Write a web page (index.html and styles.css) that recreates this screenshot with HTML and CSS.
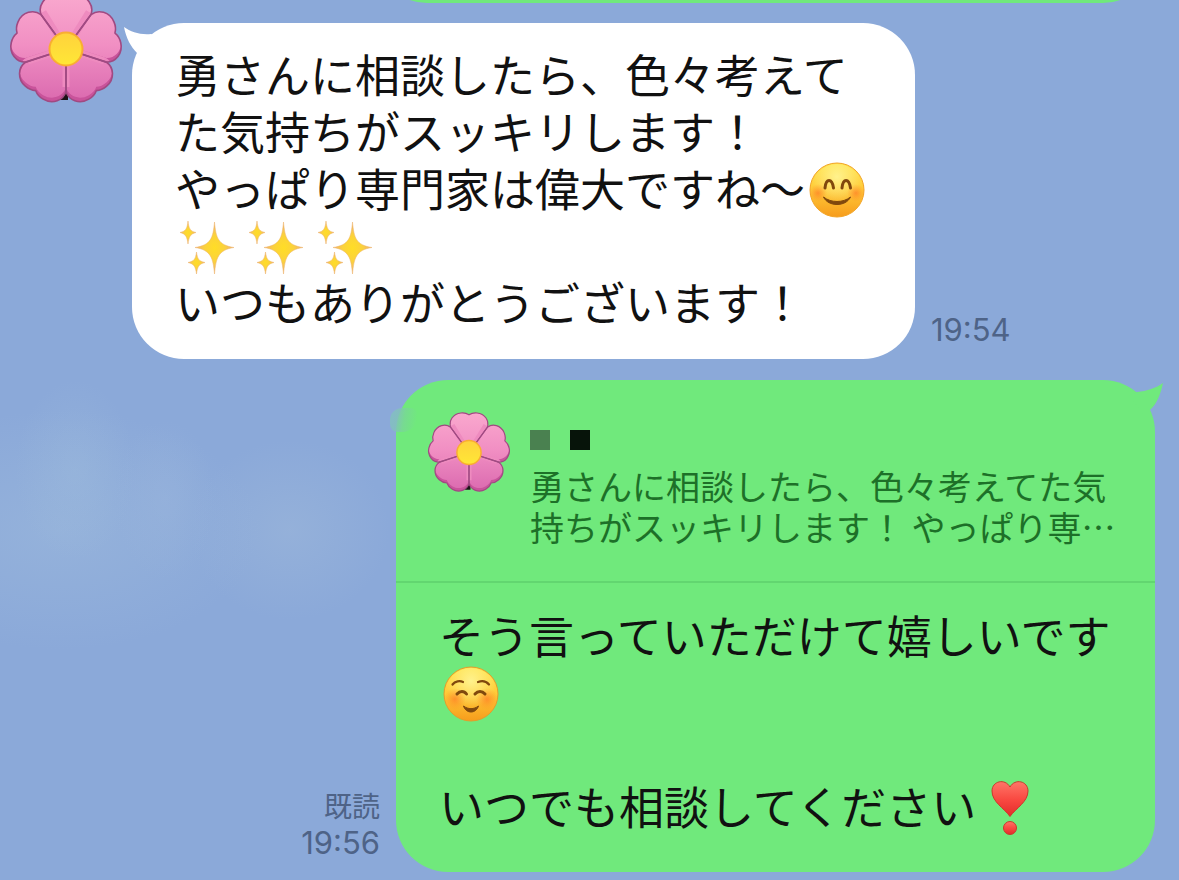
FILE: index.html
```html
<!DOCTYPE html>
<html lang="ja">
<head>
<meta charset="utf-8">
<meta name="viewport" content="width=device-width, initial-scale=1">
<title>トーク</title>
<link rel="stylesheet" href="styles.css">
</head>
<body>
<svg class="defs" aria-hidden="true">
  <defs>
    <path id="petal" d="M0 0L-25 -34.500C-28 -43 -22 -53 -11 -54C-6 -54.500 -3 -53.500 0 -51.500C3 -53.500 6 -54.500 11 -54C22 -53 28 -43 25 -34.500Z"/>
    <clipPath id="petals">
      <use href="#petal"/>
      <use href="#petal" transform="rotate(72)"/>
      <use href="#petal" transform="rotate(144)"/>
      <use href="#petal" transform="rotate(216)"/>
      <use href="#petal" transform="rotate(288)"/>
    </clipPath>
    <linearGradient id="pink" x1="0" y1="0" x2="0" y2="1">
      <stop offset="0" stop-color="#fbadd0"/>
      <stop offset=".5" stop-color="#f18fc3"/>
      <stop offset="1" stop-color="#d968ae"/>
    </linearGradient>
    <linearGradient id="pollen" x1="0" y1="0" x2="0" y2="1">
      <stop offset="0" stop-color="#ffd23c"/>
      <stop offset="1" stop-color="#ffe736"/>
    </linearGradient>
    <linearGradient id="skin" x1="0" y1="0" x2="0" y2="1">
      <stop offset="0" stop-color="#ffe24a"/>
      <stop offset=".5" stop-color="#ffca38"/>
      <stop offset="1" stop-color="#f79c1c"/>
    </linearGradient>
    <radialGradient id="shine" cx=".5" cy=".25" r=".5">
      <stop offset="0" stop-color="#fff9a0" stop-opacity=".8"/>
      <stop offset="1" stop-color="#fff9a0" stop-opacity="0"/>
    </radialGradient>
    <radialGradient id="blush">
      <stop offset="0" stop-color="#ff7a26" stop-opacity=".7"/>
      <stop offset="1" stop-color="#ff8a26" stop-opacity="0"/>
    </radialGradient>
    <radialGradient id="gold">
      <stop offset="0" stop-color="#ffdd26"/>
      <stop offset=".5" stop-color="#fbd23c"/>
      <stop offset="1" stop-color="#eeb077"/>
    </radialGradient>
    <linearGradient id="red" x1="0" y1="0" x2="0" y2="1">
      <stop offset="0" stop-color="#ff7668"/>
      <stop offset=".5" stop-color="#f94a42"/>
      <stop offset="1" stop-color="#e32b2b"/>
    </linearGradient>
    <symbol id="flower" viewBox="-56 -58 112 116" overflow="visible">
      <path d="M-8 43H2V51H-8ZM38 22H46L42 34H34Z" fill="#1b1116"/>
      <g clip-path="url(#petals)"><rect x="-60" y="-60" width="120" height="120" fill="#c9539b"/></g>
      <g clip-path="url(#petals)">
        <g transform="translate(0 -4)"><g clip-path="url(#petals)"><rect x="-60" y="-60" width="120" height="120" fill="url(#pink)"/></g></g>
        <path d="M-23 -37L0 0L23 -37M-38 12L0 0L38 12M0 0V38" stroke="#ee8bbf" stroke-width="7" fill="none"/>
      </g>
      <g fill="none" stroke="#a04a82" stroke-width="1.6" stroke-linejoin="round">
        <use href="#petal"/>
        <use href="#petal" transform="rotate(72)"/>
        <use href="#petal" transform="rotate(144)"/>
        <use href="#petal" transform="rotate(216)"/>
        <use href="#petal" transform="rotate(288)"/>
      </g>
      <circle r="16.5" fill="url(#pollen)" stroke="#f9ad32" stroke-width="2"/>
    </symbol>
    <symbol id="sparkles" viewBox="0 0 56 56">
      <g fill="url(#gold)" stroke="#edb36a" stroke-width=".5">
        <path d="M35.500 3C37 19 39 26 55 28.500C39 31 37 39 35.500 55C34 39 32 31 16 28.500C32 26 34 19 35.500 3Z"/>
        <path d="M9 2C10 10 11 12 17 13.500C11 15 10 18 9 25C8 18 7 15 1 13.500C7 12 8 10 9 2Z"/>
        <path d="M17.500 33C18.500 40 19.500 42 26 43.500C19.500 45 18.500 48 17.500 55C16.500 48 15.500 45 9 43.500C15.500 42 16.500 40 17.500 33Z"/>
      </g>
    </symbol>
  </defs>
</svg>

<main class="chat">
  <div class="row row-out row-previous"><div class="bubble bubble-out bubble-previous"></div></div>

  <article class="row row-in">
    <svg class="avatar" role="img" aria-label="アイコン"><use href="#flower"/></svg>
    <div class="bubble bubble-in">
      <svg class="tail tail-in" viewBox="0 0 34 34" aria-hidden="true"><path d="M0 4C7 9 16 12 27 11L34 14L20 34L13 30C7 24 2 15 0 4Z" fill="#fff"/></svg>
      <p>勇さんに相談したら、色々考えてた気持ちがスッキリします！</p>
      <p>やっぱり専門家は偉大ですね〜<svg class="emoji" viewBox="0 0 56 56" role="img" aria-label="笑顔">
        <circle cx="28" cy="28" r="27" fill="url(#skin)" stroke="#f2a427"/>
        <circle cx="28" cy="28" r="26" fill="url(#shine)"/>
        <circle cx="9" cy="31" r="9" fill="url(#blush)"/><circle cx="47" cy="31" r="9" fill="url(#blush)"/>
        <path d="M16 26C17 16 23 16 24.500 26M33 26C34 16 40 16 41.500 26" fill="none" stroke="#80480d" stroke-width="3" stroke-linecap="round"/>
        <path d="M14.500 35C22 41 34 41 41.500 35C37 45 19 45 14.500 35Z" fill="#80480d" stroke="#80480d" stroke-linejoin="round"/>
      </svg><svg class="emoji emoji-sparkles" role="img" aria-label="キラキラ"><use href="#sparkles"/></svg><svg class="emoji emoji-sparkles" role="img" aria-label="キラキラ"><use href="#sparkles"/></svg><svg class="emoji emoji-sparkles" role="img" aria-label="キラキラ"><use href="#sparkles"/></svg></p>
      <p>いつもありがとうございます！</p>
    </div>
    <div class="meta"><time>19:54</time></div>
  </article>

  <article class="row row-out">
    <div class="meta meta-out"><span class="read">既読</span><time>19:56</time></div>
    <div class="bubble bubble-out">
      <svg class="tail tail-out" viewBox="0 0 34 34" aria-hidden="true"><path d="M34 3C27 8 18 11 8 12L0 15L14 34L21 30C28 24 32 13 34 3Z" fill="#70e97c"/></svg>
      <span class="smudge"></span>
      <div class="quote">
        <svg class="quote-avatar" role="img" aria-label="アイコン"><use href="#flower"/></svg>
        <div class="quote-body">
          <div class="name"><span class="block block-soft"></span><span class="block"></span></div>
          <p class="quote-text">勇さんに相談したら、色々考えてた気持ちがスッキリします！ やっぱり専…</p>
        </div>
      </div>
      <div class="reply">
        <p>そう言っていただけて嬉しいです<svg class="emoji" viewBox="0 0 56 56" role="img" aria-label="ほほえみ">
          <circle cx="28" cy="28" r="27" fill="url(#skin)" stroke="#e39d2c"/>
          <circle cx="28" cy="28" r="26" fill="url(#shine)"/>
          <circle cx="12" cy="33" r="11" fill="url(#blush)"/><circle cx="44" cy="33" r="11" fill="url(#blush)"/>
          <g fill="none" stroke="#80480d" stroke-width="2.200" stroke-linecap="round">
            <path d="M9.500 18.500C12 15 17 14.500 20 16M35 16C39 14.500 43 15 46 18.500"/>
            <path d="M14 28C17 24.500 21 24.500 23.500 28M32 28C35 24.500 39 24.500 42 28" stroke-width="3"/>
          </g>
          <path d="M20.500 40C25 43.500 31 43.500 35.500 40C33 48 23 48 20.500 40Z" fill="#80480d" stroke="#80480d" stroke-linejoin="round"/>
        </svg></p>
        <p class="blank"></p>
        <p>いつでも相談してください<svg class="emoji emoji-heart" viewBox="0 0 56 56" role="img" aria-label="ハート">
          <path d="M28 36.500C22 28 10 22 10 11C10 1 23 -2 28 7C33 -2 46 1 46 11C46 22 34 28 28 36.500Z" fill="url(#red)" stroke="#c93a2c"/>
          <circle cx="28" cy="48" r="6.500" fill="url(#red)" stroke="#c93a2c"/>
        </svg></p>
      </div>
    </div>
  </article>
</main>
</body>
</html>
```
FILE: styles.css
```css
* {
  box-sizing: border-box;
}

body {
  margin: 0;
  background: #8ba9d9;
  color: #111;
  font-family: "Noto Sans CJK JP", sans-serif;
}

p {
  margin: 0;
}

.defs {
  position: absolute;
  width: 0;
  height: 0;
}

.chat {
  display: flex;
  flex-direction: column;
  min-height: 100vh;
  padding-bottom: 8px;
  overflow: hidden;
  background:
    radial-gradient(ellipse 60px 90px at 75px 470px, rgba(160, 190, 220, 0.35), transparent),
    radial-gradient(ellipse 50px 80px at 165px 500px, rgba(155, 182, 220, 0.4), transparent),
    radial-gradient(ellipse 200px 120px at 60px 530px, rgba(155, 184, 220, 0.6), transparent),
    radial-gradient(ellipse 100px 90px at 290px 530px, rgba(155, 182, 218, 0.6), transparent);
}

.row {
  display: flex;
  align-items: flex-end;
}

.row-in {
  gap: 10px;
  padding-left: 10px;
  margin-bottom: 21px;
}

.row-out {
  justify-content: flex-end;
  gap: 16px;
  padding-right: 24px;
}

.row-previous {
  height: 3px;
  margin-bottom: 20px;
}

.bubble {
  position: relative;
  border-radius: 52px;
  font-size: 45px;
  line-height: 57px;
}

.bubble-in {
  flex: 0 1 783px;
  padding: 22px 43px 29px;
  background: #fff;
}

.bubble-out {
  flex: 0 1 759px;
  background: #70e97c;
}

.bubble-previous {
  flex-basis: 780px;
  height: 120px;
}

.tail {
  position: absolute;
  width: 34px;
  height: 34px;
}

.tail-in {
  top: 0;
  left: -8px;
}

.tail-out {
  top: 0;
  right: -8px;
}

.smudge {
  position: absolute;
  top: 28px;
  left: -6px;
  width: 28px;
  height: 24px;
  border-radius: 12px 8px 16px 8px;
  background: linear-gradient(100deg, #84bcc4 15%, rgba(124, 208, 160, 0.6) 50%, transparent 90%);
}

.avatar {
  flex: none;
  align-self: flex-start;
  width: 112px;
  height: 116px;
  margin-top: -32px;
  overflow: visible;
}

.emoji {
  width: 56px;
  height: 56px;
  margin: -15px 4px -5px;
  vertical-align: middle;
  overflow: visible;
}

.emoji-sparkles {
  margin-right: 9px;
}

.emoji-heart {
  margin-left: 6px;
}

.meta {
  display: flex;
  flex-direction: column;
  flex: none;
  padding-bottom: 11px;
  margin-left: 6px;
  color: #4e6387;
  font-family: Inter, "Noto Sans CJK JP", sans-serif;
  font-size: 31px;
  line-height: 36px;
}

.meta-out {
  align-items: flex-end;
  margin-left: 0;
}

.read {
  font-size: 28px;
}

.quote {
  display: flex;
  align-items: flex-start;
  gap: 20px;
  padding: 30px 32px 34px 32px;
  border-bottom: 2px solid #62d670;
}

.quote-avatar {
  flex: none;
  width: 82px;
  height: 85px;
  overflow: visible;
}

.quote-body {
  flex: 1;
  min-width: 0;
}

.name {
  display: flex;
  gap: 20px;
  padding: 20px 0 15px;
}

.block {
  width: 20px;
  height: 20px;
  background: #07140a;
}

.block-soft {
  background: #4a8150;
}

.quote-text {
  color: #1d7028;
  font-size: 34px;
  line-height: 41px;
}

.reply {
  padding: 23px 40px 38px 43px;
}

.blank {
  height: 57px;
}
```
